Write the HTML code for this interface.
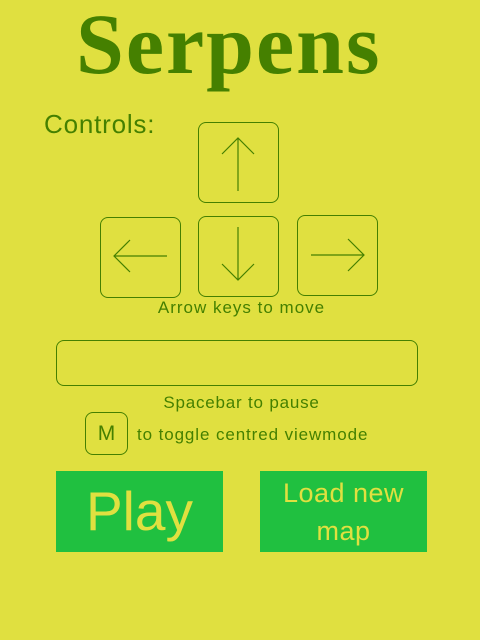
<!DOCTYPE html>
<html><head><meta charset="utf-8"><style>
html,body{margin:0;padding:0;}
body{width:480px;height:640px;background:#e0e040;position:relative;overflow:hidden;font-family:"Liberation Sans",sans-serif;color:#458000;}
.a{position:absolute;white-space:nowrap;}
.k{position:absolute;border:1px solid #458000;border-radius:8px;box-sizing:border-box;}
.b{position:absolute;background:#20c040;color:#e0e040;text-align:center;}
</style></head><body>
<div class="a" style="left:76px;top:-6px;font-family:'Liberation Serif',serif;font-weight:bold;font-size:86px;letter-spacing:2px;">Serpens</div>
<div class="a" style="left:44px;top:109px;font-size:26px;letter-spacing:0.8px;">Controls:</div>
<div class="k" style="left:198px;top:122px;width:81px;height:81px;"></div>
<div class="k" style="left:100px;top:217px;width:81px;height:81px;"></div>
<div class="k" style="left:198px;top:216px;width:81px;height:81px;"></div>
<div class="k" style="left:297px;top:215px;width:81px;height:81px;"></div>
<svg class="a" style="left:0;top:0" width="480" height="640" fill="none" stroke="#458000" stroke-width="1.2">
<path d="M238 138V191M222 154L238 138L254 154"/>
<path d="M238 227V280M222 264L238 280L254 264"/>
<path d="M114 256H167M130 240L114 256L130 272"/>
<path d="M311 255H364M348 239L364 255L348 271"/>
</svg>
<div class="a" style="left:0;width:483px;text-align:center;top:298px;font-size:17px;letter-spacing:1px;">Arrow keys to move</div>
<div class="k" style="left:56px;top:340px;width:362px;height:46px;"></div>
<div class="a" style="left:0;width:483px;text-align:center;top:393px;font-size:17px;letter-spacing:0.8px;">Spacebar to pause</div>
<div class="k" style="left:85px;top:412px;width:43px;height:43px;font-size:21px;line-height:41px;text-align:center;">M</div>
<div class="a" style="left:137px;top:425px;font-size:17px;letter-spacing:0.9px;">to toggle centred viewmode</div>
<div class="b" style="left:56px;top:471px;width:167px;height:81px;font-size:55px;line-height:80px;letter-spacing:0px;">Play</div>
<div class="b" style="left:260px;top:471px;width:167px;height:81px;font-size:27px;line-height:38px;padding-top:3px;box-sizing:border-box;letter-spacing:0.5px;">Load new<br>map</div>
</body></html>
